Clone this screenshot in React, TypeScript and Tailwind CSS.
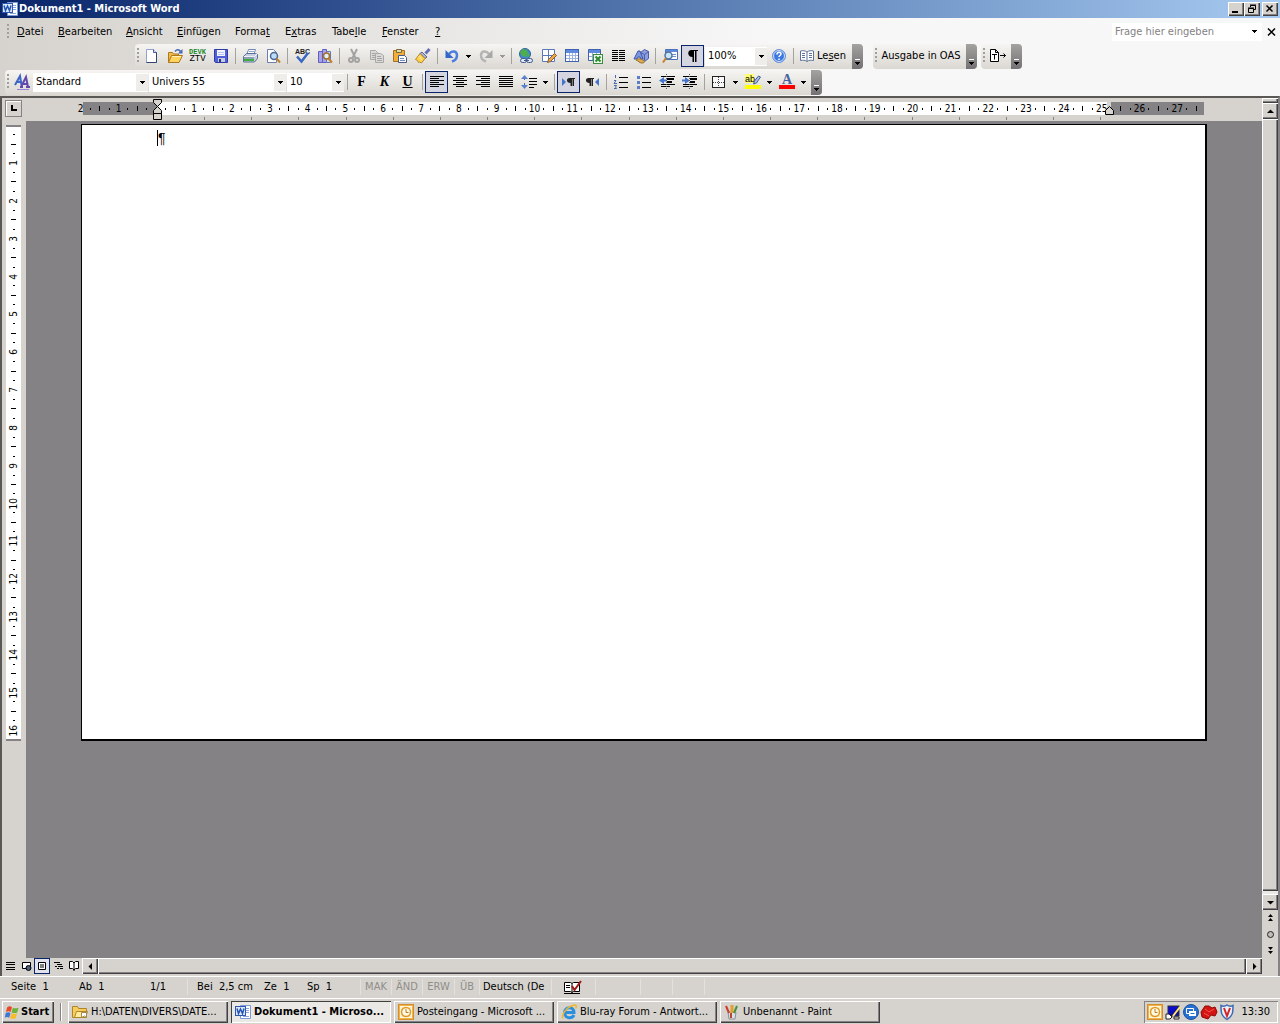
import type { ReactNode } from 'react';

const raised = 'bg-[#d6d3ce] shadow-[inset_1px_1px_0_#fff,inset_-1px_-1px_0_#404040,inset_-2px_-2px_0_#848284]';

function Svg({ children, size = 16 }: { children: ReactNode; size?: number }) {
  return (
    <svg width={size} height={size} viewBox="0 0 16 16" className="shrink-0 overflow-visible" aria-hidden="true">
      {children}
    </svg>
  );
}

function Lines({ rows, color = '#000' }: { rows: number[][]; color?: string }) {
  return (
    <>
      {rows.map(([x, y, w]) => (
        <rect key={`${x}-${y}`} x={x} y={y} width={w} height="1" fill={color} />
      ))}
    </>
  );
}

const icons: Record<string, ReactNode> = {
  new: (
    <>
      <path d="M2.5 1.5h7l3 3v10h-10z" fill="#fff" stroke="#8fa3cd" />
      <path d="M9.5 1.5v3h3" fill="#cdd9f0" stroke="#4a5f95" />
      <path d="M12.5 4.5v10h-10" fill="none" stroke="#34466f" />
    </>
  ),
  open: (
    <>
      <path d="M1.5 14.5v-10h4l1 1.5h5v2" fill="#f0bd4a" stroke="#b0781c" />
      <path d="M1.5 14.5l3-7h11l-3.5 7z" fill="#ffd45e" stroke="#b0781c" />
      <path d="M5 8.500h9" stroke="#fff1b8" />
      <path d="M8 3.5c2-2.500 4-2 5.500 0" fill="none" stroke="#4269b5" strokeWidth="1.5" />
      <path d="M15.500 1v4.500H11z" fill="#4269b5" />
    </>
  ),
  save: (
    <>
      <path d="M1.5 1.5h13v13h-12l-1-1z" fill="#5260d8" stroke="#2e3da6" />
      <rect x="4" y="2" width="8" height="6" fill="#f2f5ff" />
      <path d="M5 4.500h6M5 6.500h6" stroke="#b9c4ec" />
      <rect x="5" y="10" width="7" height="4" fill="#c5cbe0" />
      <rect x="6" y="11" width="2" height="3" fill="#26348b" />
    </>
  ),
  print: (
    <>
      <path d="M5 6l1.5-4.500h7L12 6z" fill="#fff" stroke="#7288b5" />
      <path d="M1.5 8.500l3-3h9l2 1v4l-3 3.500h-11z" fill="#c4cfdf" stroke="#5b6f94" />
      <path d="M2 8.500h10.500L15 6" fill="none" stroke="#eef2f8" />
      <path d="M2 9.500h10v1H2z" fill="#5b6f94" />
      <rect x="2" y="11" width="10" height="2" fill="#3fae3c" />
      <path d="M7 3.500h5" stroke="#92a9cf" />
    </>
  ),
  preview: (
    <>
      <path d="M2.5 1.5h6l3 3v10h-9z" fill="#fff" stroke="#6a7fae" />
      <circle cx="9" cy="8" r="3.5" fill="#bcdcf8" stroke="#4d6795" strokeWidth="1.5" />
      <path d="M11.5 10.500l3.500 4" stroke="#c3812d" strokeWidth="2" />
    </>
  ),
  spelling: (
    <>
      <text x="1" y="6" fontSize="7" fontWeight="700" fill="#222" fontFamily="Liberation Sans, sans-serif">ABC</text>
      <path d="M3 8.500l4.500 5L14 5" fill="none" stroke="#3a68c4" strokeWidth="2.5" />
    </>
  ),
  research: (
    <>
      <path d="M1.5 3.5h4v11h-4zM5.500 1.5h4v13h-4z" fill="#a7a3ea" stroke="#6260bb" />
      <path d="M9.500 3.500h4v11h-4z" fill="#d5d9f2" stroke="#6878ac" />
      <circle cx="9.5" cy="8" r="3" fill="#e3f0fc" stroke="#a17227" strokeWidth="1.5" />
      <path d="M11.5 10.500l3.500 4" stroke="#c3812d" strokeWidth="2" />
    </>
  ),
  cut: (
    <>
      <path d="M5 1l4.500 9M11 1L6.500 10" stroke="#a3a3a3" strokeWidth="2" />
      <circle cx="5" cy="12" r="2" fill="none" stroke="#a3a3a3" strokeWidth="2" />
      <circle cx="11" cy="12" r="2" fill="none" stroke="#a3a3a3" strokeWidth="2" />
    </>
  ),
  copy: (
    <>
      <path d="M1.5 2.500h5l2 2v7h-7z" fill="#dbdad7" stroke="#a8a8a8" />
      <path d="M6.500 5.500h5l3 2v7h-8z" fill="#dbdad7" stroke="#a8a8a8" />
      <path d="M3 5.500h3M3 7.500h3M3 9.500h3M8 8.500h4M8 10.500h5M8 12.500h5" stroke="#a3a3a3" />
    </>
  ),
  paste: (
    <>
      <path d="M1.5 2.500h11v11h-11z" fill="#f0ae3a" stroke="#a8701d" />
      <path d="M4.500 1.500h5v3h-5z" fill="#e3d9a8" stroke="#7a6b3c" />
      <path d="M6.500 7.500h6l2 2v5h-8z" fill="#fff" stroke="#46588c" />
      <path d="M8 10.500h4M8 12.500h5" stroke="#7287b9" />
    </>
  ),
  brush: (
    <>
      <path d="M10.500 5.500L14.500 1" stroke="#6a70b8" strokeWidth="3" />
      <path d="M7 4l5 5-2 1.500-5-5z" fill="#aab2d8" stroke="#5e6a8e" />
      <path d="M5 5.500l5 5-3.500 4.500-2-1-1 .500-1-2-2-1z" fill="#ffd24d" stroke="#b5882a" />
      <path d="M4 8l3 4" stroke="#fff0b0" />
    </>
  ),
  undo: (
    <>
      <path d="M5 6c3-4 8-3 8 1.500 0 3-2 5-5 6" fill="none" stroke="#4a7fe0" strokeWidth="2.5" />
      <path d="M1.5 2v8h8z" fill="#3466cc" />
    </>
  ),
  redo: (
    <>
      <path d="M11 6c-3-4-8-3-8 1.500 0 3 2 5 5 6" fill="none" stroke="#b5b5b5" strokeWidth="2.500" />
      <path d="M14.500 2v8h-8z" fill="#a8a8a8" />
    </>
  ),
  link: (
    <>
      <circle cx="7" cy="6" r="5.500" fill="#3f87d4" stroke="#2c6394" />
      <path d="M2 4l3-3 4 1 1 3-2 4-4-1zM10 5l2 2-3 3z" fill="#4fae4c" />
      <rect x="2.500" y="10.500" width="6" height="4" rx="2" fill="#dfe8f8" stroke="#3d5788" />
      <rect x="8.500" y="10.500" width="6" height="4" rx="2" fill="#dfe8f8" stroke="#3d5788" />
      <path d="M6 12.500h5" stroke="#3d5788" />
    </>
  ),
  tablesBorders: (
    <>
      <path d="M1.5 1.5h12v12h-12zM7.500 1.5v12M1.500 7.500h12" fill="#fff" stroke="#5b78ba" />
      <path d="M6.500 14.500l1-3 6-6 2 2-6 6z" fill="#eda84a" stroke="#8c5b2a" />
    </>
  ),
  table: (
    <>
      <rect x="1.5" y="1.500" width="13" height="12" fill="#fff" stroke="#3f62ac" />
      <rect x="2" y="2" width="12" height="3" fill="#5e89e0" />
      <path d="M5.500 5v8M8.500 5v8M11.500 5v8M2 7.500h12M2 10.500h12" stroke="#9cb3e2" />
    </>
  ),
  excel: (
    <>
      <path d="M1.5 1.5h12v11h-12z" fill="#fff" stroke="#3f62ac" />
      <rect x="2" y="2" width="11" height="3" fill="#5e89e0" />
      <path d="M5.500 5v7M9.500 5v7M2 8.500h11" stroke="#8fa9de" />
      <rect x="6.500" y="6.500" width="9" height="9" fill="#eef8ec" stroke="#3c8a3d" />
      <path d="M8.500 8.500l5 5M13.500 8.500l-5 5" stroke="#2b8a2d" strokeWidth="2" />
    </>
  ),
  columns: (
    <Lines
      rows={[2, 4, 6, 8, 10, 12].flatMap((y) => [
        [2, y, 6],
        [9, y, 6],
      ])}
    />
  ),
  drawing: (
    <>
      <path d="M7.500 4.500l4-3 4 2v7l-4 3-4-2z" fill="#8f9fdc" stroke="#4a5cae" />
      <path d="M7.500 4.500l4 2 4-3M11.500 6.500v6" fill="none" stroke="#4a5cae" />
      <path d="M1 11L5 3h2l3 8H7.500L7 9H5l-1 2z" fill="#7d98e3" stroke="#3d55a8" />
      <path d="M3 12c2-2 5-1 7 0s2 3-1 3-3-2-6-3z" fill="#e0ac50" stroke="#93702a" />
    </>
  ),
  docmap: (
    <>
      <path d="M3.500 1.500h12v10h-12z" fill="#fff" stroke="#4a71bd" />
      <rect x="4" y="2" width="11" height="2" fill="#5e89e0" />
      <path d="M10 6.500h4M10 8.500h4" stroke="#7490c8" />
      <circle cx="6.500" cy="7.500" r="3.500" fill="#c4e6f9" stroke="#56739e" strokeWidth="1.500" />
      <path d="M4 10l-3 4.500" stroke="#c3812d" strokeWidth="2" />
    </>
  ),
  pilcrow: <path d="M6.500 2H13v1h-1.500v11H10V3H9v11H7.500V9C2 9 2 2 6.500 2z" fill="#000" />,
  help: (
    <>
      <circle cx="8" cy="8" r="6.500" fill="#3d7ae0" stroke="#6d94dc" />
      <circle cx="8" cy="8" r="5.500" fill="none" stroke="#cfe0fb" />
      <path d="M6 6.500c0-3 4-3 4-.500 0 1.500-2 1.500-2 3M8 10.500v1.500" fill="none" stroke="#fff" strokeWidth="1.500" />
    </>
  ),
  read: (
    <>
      <path d="M8 4C6 2.500 4 2.500 1.500 3v9.500c2.500-.500 4.500-.500 6.500 1 2-1.500 4-1.500 6.500-1V3C12 2.500 10 2.500 8 4z" fill="#fff" stroke="#5f7396" />
      <path d="M8 4v9.500M3 5.500h3M3 7.500h3M3 9.500h3M10 5.500h3M10 7.500h3M10 9.500h3" stroke="#5f7396" />
    </>
  ),
  exportDoc: (
    <>
      <path d="M.5 1.500h5l3 3v9h-8zM5.500 1.500v3h3" fill="#fff" stroke="#000" />
      <path d="M2 6.500h5M4.500 6.500v5M10 7.500h5.500M13.500 5.500l2 2-2 2" fill="none" stroke="#000" />
    </>
  ),
  styles: (
    <>
      <path d="M1 11L6 2l1.500 9M3 8h4" fill="none" stroke="#3f66c4" strokeWidth="2" />
      <path d="M7 13l5-10 2 10M9 10h4.500M6 13h3M12 13h4" fill="none" stroke="#6248ae" strokeWidth="2" />
      <path d="M3 15.500h12" stroke="#a080d8" />
    </>
  ),
  left: <Lines rows={[[1, 2, 14], [1, 4, 9], [1, 6, 14], [1, 8, 9], [1, 10, 14], [1, 12, 9]]} />,
  center: <Lines rows={[[1, 2, 14], [4, 4, 8], [1, 6, 14], [4, 8, 8], [1, 10, 14], [4, 12, 8]]} />,
  right: <Lines rows={[[1, 2, 14], [6, 4, 9], [1, 6, 14], [6, 8, 9], [1, 10, 14], [6, 12, 9]]} />,
  justify: <Lines rows={[[1, 2, 14], [1, 4, 14], [1, 6, 14], [1, 8, 14], [1, 10, 14], [1, 12, 14]]} />,
  spacing: (
    <>
      <path d="M3.500 2v4M3.500 9v4" stroke="#4668ae" />
      <path d="M0 5l3.500-4L7 5zM0 11l3.500 4L7 11z" fill="#5c80ce" />
      <Lines rows={[[8, 4, 8], [8, 7, 8], [8, 10, 8], [8, 13, 5]]} />
    </>
  ),
  ltr: (
    <>
      <path d="M1 4v8l4-4z" fill="#4474cc" />
      <path d="M8.500 4H14v1h-1v7h-1.500V5h-.500v7H9.500V9C5 9 5 4 8.500 4z" fill="#222" />
    </>
  ),
  rtl: (
    <>
      <path d="M15 4v8l-4-4z" fill="#4474cc" />
      <path d="M4.500 4H10v1H9v7H7.500V5H7v7H5.500V9C1 9 1 4 4.500 4z" fill="#222" />
    </>
  ),
  numbers: (
    <>
      <path d="M2.500 1v3M1 6.500h2l-2 3h3M1 11.500h2.500l-1 1.500 1 1.500H1" fill="none" stroke="#4668ae" />
      <Lines rows={[[6, 3, 9], [6, 8, 9], [6, 13, 9]]} />
    </>
  ),
  bullets: (
    <>
      <path d="M1 2h3v3H1zM1 7h3v3H1zM1 12h3v3H1z" fill="#5b7cc8" />
      <Lines rows={[[6, 3, 9], [6, 8, 9], [6, 13, 9]]} />
    </>
  ),
  outdent: (
    <>
      <Lines rows={[[2, 2, 14], [8, 4, 7], [8, 5, 7], [8, 7, 5], [8, 8, 5], [2, 10, 14], [2, 12, 9]]} />
      <path d="M5 3v7L0 6.500zM5 5.500h3v2H5z" fill="#4474cc" />
      <path d="M7.500 0v15" stroke="#555" strokeDasharray="1 1" />
    </>
  ),
  indent: (
    <>
      <Lines rows={[[1, 2, 14], [8, 4, 7], [8, 5, 7], [8, 7, 5], [8, 8, 5], [1, 10, 14], [1, 12, 10]]} />
      <path d="M3 3v7l5-3.500zM0 5.500h3v2H0z" fill="#4474cc" />
      <path d="M7.500 0v15" stroke="#555" strokeDasharray="1 1" />
    </>
  ),
  borders: (
    <>
      <rect x="1.500" y="2.500" width="12" height="11" fill="#f8f8f8" stroke="#222" />
      <path d="M7.500 3v10M2 8.500h11" stroke="#444" strokeDasharray="1 1" />
    </>
  ),
  highlight: (
    <>
      <rect x="0" y="11" width="16" height="4" fill="#ff0" />
      <rect x="0" y="0" width="9" height="9" fill="#ffff70" />
      <text x="0" y="8" fontSize="9" fill="#000" fontFamily="Liberation Sans, sans-serif">ab</text>
      <path d="M8.500 10l1-3 4-5 2 1-4 6z" fill="#a9bfe6" stroke="#49618e" />
    </>
  ),
  fontColor: (
    <>
      <text x="3" y="10" fontSize="14" fontWeight="700" fill="#46639e" fontFamily="Liberation Serif, serif">A</text>
      <rect x="0" y="11" width="16" height="4" fill="#f00" />
    </>
  ),
  word: (
    <>
      <path d="M5.500 1.500h10v13h-10z" fill="#fff" stroke="#7c9bd6" />
      <path d="M11 4.500h3M11 6.500h3M11 8.500h3M8 12.500h6" stroke="#8aa5da" />
      <rect x="0.500" y="2.500" width="10" height="9" fill="#dbe7fb" stroke="#2e58ae" />
      <path d="M2 4.500l1.500 5L5.500 5l2 4.500 1.500-5" fill="none" stroke="#2453b3" strokeWidth="1.500" />
    </>
  ),
  folder: (
    <>
      <path d="M.5 2.500h5l1 2h8v9H.500z" fill="#f4cd60" stroke="#b28423" />
      <path d="M2.500 13.500l2-6h11l-2 6z" fill="#ffec9d" stroke="#b28423" />
      <path d="M9.500 8.500h5v5l-2-1.500-3 1.500z" fill="#fff" stroke="#a38b4e" />
    </>
  ),
  outlook: (
    <>
      <rect x="0.500" y="0.500" width="15" height="15" fill="#f4b347" stroke="#d08f2c" />
      <rect x="2.500" y="2.500" width="11" height="11" fill="#ffeab0" stroke="#fff6dc" />
      <circle cx="8" cy="8" r="4.500" fill="#fffae6" stroke="#dd9a2c" strokeWidth="1.500" />
      <path d="M8 5v3.500h2.500" fill="none" stroke="#c07a1a" />
    </>
  ),
  ie: (
    <>
      <path d="M13 11C11 15 4 15 3.500 8.500 3.500 2.500 13 2 13 8.500H5" fill="none" stroke="#2a8fdd" strokeWidth="3" />
      <path d="M2.500 14.500C-1 13 5 2 14 1c2 0 1.500 2 .500 3.500" fill="none" stroke="#efb72c" strokeWidth="1.500" />
    </>
  ),
  paint: (
    <>
      <path d="M4 8l1 7h6l1-7z" fill="#d8dde6" stroke="#8a8f9c" />
      <path d="M5 9L2 2" stroke="#d03a2a" strokeWidth="2" />
      <path d="M8 9V1" stroke="#e1a02a" strokeWidth="3" />
      <path d="M10 9l3-7" stroke="#4b8e3c" strokeWidth="2" />
      <path d="M7 14V9" stroke="#b5482f" strokeWidth="2" />
    </>
  ),
  windows: (
    <>
      <path d="M2.500 2.500c2-1.500 4-1 5.500 0l-1.500 5.500c-1.500-1-3.500-1-5.500 0z" fill="#e8492a" />
      <path d="M9 3c2 1 4 1 6.500 0L14 8.500c-2 1-4.500 1-6.500 0z" fill="#6db33a" />
      <path d="M.8 9c2-1 4-1 5.500 0l-1.500 5.500c-1.500-1-3.500-1-5 0z" fill="#3d74d8" />
      <path d="M7.300 9.500c2 1 4 1 6.500 0l-1.500 5.500c-2 1-4.500 1-6.500 0z" fill="#f5bd2a" />
    </>
  ),
  monitor: (
    <>
      <rect x="3" y="2" width="11" height="10" fill="#0a0ad0" stroke="#303030" />
      <path d="M4 11L13 3v8z" fill="#12128c" />
      <path d="M15 3l-7 9" stroke="#ffe86a" strokeWidth="2" />
      <path d="M1 10h3l3 3-2 2H1zM9 13h5v2H9z" fill="#fff" stroke="#222" />
    </>
  ),
  remote: (
    <>
      <circle cx="8" cy="8" r="7.500" fill="#276fd0" stroke="#1d53a2" />
      <path d="M3.500 4.500h7v5h-7z" fill="none" stroke="#fff" />
      <path d="M6 7h7v5H6z" fill="#fff" />
      <path d="M7.500 9.500h4" stroke="#276fd0" />
    </>
  ),
  redBlob: (
    <>
      <path d="M0 8l4-6h4l3 2 3-1 2 5-2 4-4-1-3 4-6-2z" fill="#d41414" stroke="#8d0808" />
      <path d="M4 5l4 3 5-3M3 9l5 3" fill="none" stroke="#f25b4b" />
    </>
  ),
  shield: (
    <>
      <path d="M2 1.500c2 1 4 1 6-.500 2 1.500 4 1.500 6 .500 0 7 0 10-6 14C2 11.500 2 8.500 2 1.500z" fill="#e9f0fa" stroke="#3c6ab5" strokeWidth="1.500" />
      <path d="M5 4l3 8 3-8" fill="none" stroke="#d02626" strokeWidth="2" />
    </>
  ),
  book: (
    <>
      <path d="M.5 3.500h6l1.500 1 1.500-1h6v9h-6l-1.500 1-1.500-1h-6z" fill="#fff" stroke="#000" />
      <path d="M8 4.500v9M2 6.500h4M2 8.500h4M0 14.500h16" stroke="#000" />
      <path d="M8 7l2.500 4L17 2" fill="none" stroke="#a01818" strokeWidth="2" />
    </>
  ),
  viewNormal: <Lines rows={[[4, 4, 9], [4, 6, 9], [4, 9, 9], [4, 11, 9]]} />,
  viewWeb: (
    <>
      <path d="M4.500 4.500h8v6h-8z" fill="#fff" stroke="#000" />
      <circle cx="10.500" cy="10" r="2.500" fill="#4a5f85" stroke="#000" />
    </>
  ),
  viewPrint: (
    <>
      <path d="M4.500 4.500h7v7h-7z" fill="#fff" stroke="#000" />
      <path d="M6 7h4M6 9h4" stroke="#000" />
    </>
  ),
  viewOutline: <Lines rows={[[4, 4, 6], [7, 6, 5], [5, 8, 2], [8, 8, 5], [7, 10, 2], [10, 10, 3]]} />,
  viewRead: (
    <>
      <path d="M3.500 3.500h3L8 5l1.500-1.500h3v7h-3L8 12l-1.500-1.500h-3z" fill="#fff" stroke="#000" />
      <path d="M8 5v8" stroke="#000" />
    </>
  ),
};

function Arrow({ dir = 'down' }: { dir?: 'up' | 'down' | 'left' | 'right' }) {
  const paths = { down: 'M1 3h7L4.500 6.500z', up: 'M1 6h7L4.500 2.500z', left: 'M6 1v7L2.500 4.500z', right: 'M3 1v7l3.500-3.500z' };
  return (
    <svg width="9" height="9" viewBox="0 0 9 9" className="shrink-0" aria-hidden="true">
      <path d={paths[dir]} />
    </svg>
  );
}

function DropArrow({ color = '#000' }: { color?: string }) {
  return (
    <svg width="5" height="3" viewBox="0 0 5 3" className="shrink-0" aria-hidden="true">
      <path d="M0 0h5v1H4v1H3v1H2V2H1V1H0z" fill={color} />
    </svg>
  );
}

function Grip() {
  return <span className="mr-px ml-0.5 h-4 w-0.5 shrink-0 bg-[repeating-linear-gradient(to_bottom,#a09e9a_0_2px,transparent_2px_4px)]" />;
}

function Sep() {
  return (
    <span className="flex w-1.5 shrink-0 justify-center">
      <span className="h-4 w-px bg-[#a5a29c]" />
    </span>
  );
}

function Tool({ label, icon, active, drop, disabled }: { label: string; icon: ReactNode; active?: boolean; drop?: boolean; disabled?: boolean }) {
  return (
    <>
      <button
        aria-label={label}
        disabled={disabled}
        className={`flex h-[22px] w-[23px] shrink-0 items-center justify-center ${active ? 'border border-[#0a246a] bg-[#d4d5e0]' : ''}`}
      >
        {icon}
      </button>
      {drop && (
        <button aria-label={`${label} Optionen`} disabled={disabled} className="flex h-[22px] w-[11px] shrink-0 items-center justify-center">
          <DropArrow color={disabled ? '#999' : '#000'} />
        </button>
      )}
    </>
  );
}

function I({ name }: { name: string }) {
  return <Svg>{icons[name]}</Svg>;
}

function Combo({ label, value, width }: { label: string; value: string; width: string }) {
  return (
    <span className={`flex h-[19px] shrink-0 items-center bg-white ${width}`}>
      <select aria-label={label} className="h-full min-w-0 flex-1 appearance-none bg-white pl-[3px] outline-none">
        <option>{value}</option>
      </select>
      <span className="flex h-[17px] w-3 items-center justify-center bg-[#efedea]">
        <DropArrow />
      </span>
    </span>
  );
}

function Toolbar({ children, label }: { children: ReactNode; label: string }) {
  return (
    <div role="toolbar" aria-label={label} className="flex h-[25px] shrink-0 items-center rounded-sm bg-linear-to-b from-[#f6f5f3] to-[#dbd8d2]">
      {children}
      <button aria-label="Optionen für Symbolleisten" className="ml-0.5 flex h-[25px] w-[11px] flex-col items-center justify-end gap-0.5 rounded-r-sm bg-linear-to-b from-[#a5a3a0] to-[#737173] pb-1">
        <span className="h-px w-[5px] bg-white" />
        <DropArrow />
      </button>
    </div>
  );
}

const menus = [
  ['', 'D', 'atei', 'w-[41px]'],
  ['', 'B', 'earbeiten', 'w-[68px]'],
  ['', 'A', 'nsicht', 'w-[51px]'],
  ['', 'E', 'infügen', 'w-[58px]'],
  ['Forma', 't', '', 'w-[50px]'],
  ['E', 'x', 'tras', 'w-[47px]'],
  ['Tabe', 'l', 'le', 'w-[50px]'],
  ['', 'F', 'enster', 'w-[53px]'],
  ['', '?', '', 'w-5'],
];

// one cell per quarter centimetre
function rulerMark(q: number) {
  if (q === 0) return null;
  if (q % 4 === 0) return Math.abs(q / 4);
  return q % 2 === 0 ? 'tick' : 'dot';
}

function HorizontalRuler() {
  const marks = Array.from({ length: 119 }, (_, i) => rulerMark(i - 8));
  return (
    <div className="relative mr-[58px] ml-[55px] flex min-w-0 flex-1 flex-col pt-1">
      <div className="h-[13px] bg-[linear-gradient(to_right,transparent_2px,#848284_2px_6.76%,#fff_6.76%_91.4%,#d6d3ce_91.4%_91.7%,#848284_91.7%)]">
        <div className="mr-1 -ml-[5px] flex h-full items-center">
          {marks.map((m, i) => (
            <span key={i} className="flex min-w-0 flex-1 basis-0 justify-center text-[10px] leading-3 whitespace-nowrap">
              {m === 'tick' ? <span className="h-[5px] w-px bg-black" /> : m === 'dot' ? <span className="h-0.5 w-px bg-black" /> : m}
            </span>
          ))}
        </div>
      </div>
      <div className="mt-0.5 mr-[7.1%] ml-[8.9%] flex">
        {Array.from({ length: 20 }, (_, i) => (
          <span key={i} className="flex flex-1 justify-center">
            <span className="h-[3px] w-px bg-[#848284]" />
          </span>
        ))}
      </div>
      <svg width="9" height="23" viewBox="0 0 9 23" className="absolute top-0 left-[calc(6.76%-4px)]" aria-hidden="true">
        <path d="M.5 1.500h8v3l-4 4-4-4z" fill="#d6d3ce" stroke="#000" />
        <path d="M.5 15.500v-3l4-4 4 4v3zM.500 15.500h8v6h-8z" fill="#d6d3ce" stroke="#000" />
      </svg>
      <svg width="9" height="9" viewBox="0 0 9 9" className="absolute top-2 left-[calc(91.5%-4px)]" aria-hidden="true">
        <path d="M.5 8.500v-4l4-4 4 4v4z" fill="#d6d3ce" stroke="#000" />
      </svg>
    </div>
  );
}

function VerticalRuler() {
  const marks = Array.from({ length: 64 }, (_, i) => rulerMark(i + 1));
  return (
    <div className="flex w-6 shrink-0 flex-col pt-1 pl-1">
      <div className="flex h-[616px] w-[15px] flex-col border-t-2 border-b-2 border-t-[#848284] border-b-[#848284] bg-white pt-[3px] pb-1">
        {marks.map((m, i) => (
          <span key={i} className="flex min-h-0 flex-1 basis-0 items-center justify-center">
            {m === 'tick' ? (
              <span className="h-px w-[5px] bg-black" />
            ) : m === 'dot' ? (
              <span className="h-px w-0.5 bg-black" />
            ) : (
              <span className="rotate-180 text-[10px] leading-3 [writing-mode:vertical-rl]">{m}</span>
            )}
          </span>
        ))}
      </div>
    </div>
  );
}

function VerticalScrollbar() {
  return (
    <div className="flex w-4 shrink-0 flex-col">
      <div className={`h-[5px] ${raised}`} />
      <button aria-label="Nach oben" className={`flex h-4 items-center justify-center ${raised}`}>
        <Arrow dir="up" />
      </button>
      <div className={`flex-1 ${raised}`} />
      <div className="h-[3px] bg-[#ebe9e6]" />
      <button aria-label="Nach unten" className={`flex h-4 items-center justify-center ${raised}`}>
        <Arrow />
      </button>
      <button aria-label="Vorherige Seite" className="flex h-4 items-center justify-center">
        <svg width="7" height="8" viewBox="0 0 7 8"><path d="M3.500 0L6 3H1zM3.500 4L6 7H1z" /></svg>
      </button>
      <button aria-label="Browseobjekt auswählen" className="flex h-4 items-center justify-center">
        <svg width="7" height="7" viewBox="0 0 7 7"><circle cx="3.500" cy="3.500" r="3" fill="#c0bebb" stroke="#222" /></svg>
      </button>
      <button aria-label="Nächste Seite" className="flex h-4 items-center justify-center">
        <svg width="7" height="8" viewBox="0 0 7 8"><path d="M3.500 4L6 1H1zM3.500 8L6 5H1z" /></svg>
      </button>
      <div className="h-[18px]" />
    </div>
  );
}

const views = [
  ['viewNormal', 'Normalansicht'],
  ['viewWeb', 'Weblayout'],
  ['viewPrint', 'Seitenlayout'],
  ['viewOutline', 'Gliederung'],
  ['viewRead', 'Lesemodus'],
];

function StatusPane({ children, width, off }: { children?: ReactNode; width: string; off?: boolean }) {
  return (
    <span className={`flex h-4 shrink-0 items-center border-r border-[#e3e1dd] whitespace-pre ${width} ${off ? 'text-[#8f8d8a]' : ''}`}>{children}</span>
  );
}

const tasks = [
  { icon: 'folder', title: 'H:\\DATEN\\DIVERS\\DATE...' },
  { icon: 'word', title: 'Dokument1 - Microso...', active: true },
  { icon: 'outlook', title: 'Posteingang - Microsoft ...' },
  { icon: 'ie', title: 'Blu-ray Forum - Antwort...' },
  { icon: 'paint', title: 'Unbenannt - Paint' },
];

export default function App() {
  return (
    <div className="flex h-screen flex-col overflow-hidden bg-[#d6d3ce] font-['DejaVu_Sans_Condensed','DejaVu_Sans',sans-serif] text-[11px] leading-4 text-black [font-stretch:condensed]">
      <header className="flex h-[18px] shrink-0 items-center bg-linear-to-r from-[#0a246a] to-[#a6caf0] pr-0.5 pl-0.5">
        <I name="word" />
        <h1 className="ml-px flex-1 font-bold text-white">Dokument1 - Microsoft Word</h1>
        <button aria-label="Minimieren" className={`flex h-3.5 w-4 items-center justify-center ${raised}`}>
          <svg width="10" height="10" viewBox="0 0 10 10"><path d="M1 7h6v2H1z" /></svg>
        </button>
        <button aria-label="Wiederherstellen" className={`flex h-3.5 w-4 items-center justify-center ${raised}`}>
          <svg width="10" height="10" viewBox="0 0 10 10"><path d="M3.500 3V1.500h5v4H7M3 1h6M1.500 4.500h5v4h-5zM1 4h6" fill="none" stroke="#000" /></svg>
        </button>
        <button aria-label="Schließen" className={`ml-0.5 flex h-3.5 w-4 items-center justify-center ${raised}`}>
          <svg width="10" height="10" viewBox="0 0 10 10"><path d="M1.500 1.500l6 6M7.500 1.500l-6 6" stroke="#000" strokeWidth="1.500" /></svg>
        </button>
      </header>

      <div className="flex h-[78px] shrink-0 flex-col bg-linear-to-r from-[#d6d3ce] to-[#f7f7f7] to-60% pt-0.5">
        <div className="flex h-[23px] items-center pl-[5px]">
          <Grip />
          <nav className="ml-0.5 flex flex-1">
            {menus.map(([before, key, after, width]) => (
              <button key={before + key} className={`shrink-0 pl-[5px] text-left whitespace-nowrap ${width}`}>
                {before}
                <u>{key}</u>
                {after}
              </button>
            ))}
          </nav>
          <div className="flex h-[18px] w-[150px] items-center bg-white pr-[5px]">
            <input aria-label="Frage hier eingeben" placeholder="Frage hier eingeben" className="min-w-0 flex-1 bg-white pl-[3px] outline-none placeholder:text-[#848284]" />
            <DropArrow />
          </div>
          <button aria-label="Fenster schließen" className="flex w-[18px] justify-center">
            <svg width="9" height="8" viewBox="0 0 9 8"><path d="M1 .500l7 7M8 .500l-7 7" stroke="#000" strokeWidth="1.500" /></svg>
          </button>
        </div>

        <div className="flex h-[26px] items-center pl-[135px]">
          <Toolbar label="Standard">
            <Grip />
            <Tool label="Neu" icon={<I name="new" />} />
            <Tool label="Öffnen" icon={<I name="open" />} />
            <Tool
              label="DEVK ZTV"
              icon={
                <span className="flex flex-col font-['Liberation_Mono',monospace] text-[9px] leading-[7px]">
                  <span className="text-[7px] font-bold text-[#1d8a2d]">DEVK</span>
                  <span>ZTV</span>
                </span>
              }
            />
            <Tool label="Speichern" icon={<I name="save" />} />
            <Sep />
            <Tool label="Drucken" icon={<I name="print" />} />
            <Tool label="Seitenansicht" icon={<I name="preview" />} />
            <Sep />
            <Tool label="Rechtschreibung" icon={<I name="spelling" />} />
            <Tool label="Recherchieren" icon={<I name="research" />} />
            <Sep />
            <Tool label="Ausschneiden" icon={<I name="cut" />} disabled />
            <Tool label="Kopieren" icon={<I name="copy" />} disabled />
            <Tool label="Einfügen" icon={<I name="paste" />} />
            <Tool label="Format übertragen" icon={<I name="brush" />} />
            <Sep />
            <Tool label="Rückgängig" icon={<I name="undo" />} drop />
            <Tool label="Wiederholen" icon={<I name="redo" />} drop disabled />
            <Sep />
            <Tool label="Hyperlink" icon={<I name="link" />} />
            <Tool label="Tabellen und Rahmen" icon={<I name="tablesBorders" />} />
            <Tool label="Tabelle einfügen" icon={<I name="table" />} />
            <Tool label="Excel-Tabelle einfügen" icon={<I name="excel" />} />
            <Tool label="Spalten" icon={<I name="columns" />} />
            <Tool label="Zeichnen" icon={<I name="drawing" />} />
            <Sep />
            <Tool label="Dokumentstruktur" icon={<I name="docmap" />} />
            <Tool label="Absatzmarken" icon={<I name="pilcrow" />} active />
            <Combo label="Zoom" value="100%" width="ml-px w-[62px]" />
            <Tool label="Hilfe" icon={<I name="help" />} />
            <Sep />
            <button className="flex w-[54px] shrink-0 items-center gap-0.5 pl-[3px] whitespace-nowrap">
              <I name="read" />
              <span>Le<u>s</u>en</span>
            </button>
          </Toolbar>
          <div className="ml-2.5 flex gap-1">
            <Toolbar label="Ausgabe">
              <Grip />
              <button className="w-[86px] text-center whitespace-nowrap">Ausgabe in OAS</button>
            </Toolbar>
            <Toolbar label="Export">
              <Grip />
              <Tool label="Exportieren" icon={<I name="exportDoc" />} />
            </Toolbar>
          </div>
        </div>

        <div className="flex h-[26px] items-center pl-[5px]">
          <Toolbar label="Format">
            <Grip />
            <Tool label="Formatvorlagen" icon={<I name="styles" />} />
            <span className="flex gap-px">
              <Combo label="Formatvorlage" value="Standard" width="w-[115px]" />
              <Combo label="Schriftart" value="Univers 55" width="w-[137px]" />
              <Combo label="Schriftgrad" value="10" width="w-[57px]" />
            </span>
            <Sep />
            <Tool label="Fett" icon={<b className="font-['Liberation_Serif',serif] text-sm">F</b>} />
            <Tool label="Kursiv" icon={<b className="font-['Liberation_Serif',serif] text-sm italic">K</b>} />
            <Tool label="Unterstrichen" icon={<b className="font-['Liberation_Serif',serif] text-sm underline">U</b>} />
            <Sep />
            <Tool label="Linksbündig" icon={<I name="left" />} active />
            <Tool label="Zentriert" icon={<I name="center" />} />
            <Tool label="Rechtsbündig" icon={<I name="right" />} />
            <Tool label="Blocksatz" icon={<I name="justify" />} />
            <Tool label="Zeilenabstand" icon={<I name="spacing" />} drop />
            <Sep />
            <Tool label="Von links nach rechts" icon={<I name="ltr" />} active />
            <Tool label="Von rechts nach links" icon={<I name="rtl" />} />
            <Sep />
            <Tool label="Nummerierung" icon={<I name="numbers" />} />
            <Tool label="Aufzählungszeichen" icon={<I name="bullets" />} />
            <Tool label="Einzug verkleinern" icon={<I name="outdent" />} />
            <Tool label="Einzug vergrößern" icon={<I name="indent" />} />
            <Sep />
            <Tool label="Rahmenlinie" icon={<I name="borders" />} drop />
            <Tool label="Hervorheben" icon={<I name="highlight" />} drop />
            <Tool label="Schriftfarbe" icon={<I name="fontColor" />} drop />
          </Toolbar>
        </div>
      </div>

      <div className="flex min-h-0 flex-1 border-t-2 border-r-2 border-l-2 border-t-[#5a5855] border-r-[#848284] border-l-[#5a5855]">
        <div className="flex min-w-0 flex-1 flex-col">
          <div className="flex h-[23px] shrink-0">
            <div className="w-6 shrink-0 pt-0.5 pl-[3px]">
              <button aria-label="Tabstopp" className="flex size-[17px] items-center justify-center border border-[#848284] shadow-[inset_1px_1px_0_#fff]">
                <svg width="7" height="7" viewBox="0 0 7 7"><path d="M1 0h2v4h4v2H1z" /></svg>
              </button>
            </div>
            <HorizontalRuler />
          </div>
          <main className="flex min-h-0 flex-1">
            <VerticalRuler />
            <div className="min-w-0 flex-1 bg-[#848284] pt-[3px] pr-[55px] pl-[55px]">
              <article className="flex h-[617px] items-start border-t border-r-2 border-b-2 border-l border-black bg-white pt-[5px] pl-[75px]">
                <span className="h-4 w-px bg-black" />
                <p className="font-['Liberation_Sans',sans-serif] text-sm leading-4">¶</p>
              </article>
            </div>
          </main>
          <div className="flex h-[18px] shrink-0 items-start">
            <div className="flex">
              {views.map(([icon, label]) => (
                <button key={icon} aria-label={label} className={`flex size-4 items-center justify-center ${icon === 'viewPrint' ? 'border border-[#0a246a] bg-[#e2e2ea]' : ''}`}>
                  <I name={icon} />
                </button>
              ))}
            </div>
            <button aria-label="Nach links" className={`flex h-4 w-4 items-center justify-center ${raised}`}>
              <Arrow dir="left" />
            </button>
            <div className={`h-4 flex-1 ${raised}`} />
            <button aria-label="Nach rechts" className={`flex h-4 w-4 items-center justify-center ${raised}`}>
              <Arrow dir="right" />
            </button>
          </div>
        </div>
        <VerticalScrollbar />
      </div>

      <footer className="flex h-[22px] shrink-0 items-center border-t border-white pb-px pl-[11px]">
        <StatusPane width="w-[68px] border-r-0">Seite  1</StatusPane>
        <StatusPane width="w-[71px] border-r-0">Ab  1</StatusPane>
        <StatusPane width="w-[38px]">1/1</StatusPane>
        <StatusPane width="w-[76px] border-r-0 pl-[9px]">Bei  2,5 cm</StatusPane>
        <StatusPane width="w-[43px] border-r-0">Ze  1</StatusPane>
        <StatusPane width="w-[54px]">Sp  1</StatusPane>
        <StatusPane width="w-[31px] justify-center" off>MAK</StatusPane>
        <StatusPane width="w-[31px] justify-center" off>ÄND</StatusPane>
        <StatusPane width="w-[32px] justify-center" off>ERW</StatusPane>
        <StatusPane width="w-[25px] justify-center" off>ÜB</StatusPane>
        <StatusPane width="w-[72px] pl-[3px]">Deutsch (De</StatusPane>
        <StatusPane width="w-[44px] pl-3"><I name="book" /></StatusPane>
        <StatusPane width="w-[45px]" />
        <StatusPane width="w-[32px]" />
        <StatusPane width="w-[32px]" />
      </footer>

      <div className="flex h-[26px] shrink-0 items-center border-t border-white px-0.5">
        <button className={`flex h-[22px] w-[52px] items-center gap-0.5 pl-[3px] font-bold ${raised}`}>
          <Svg size={14}>{icons.windows}</Svg>
          Start
        </button>
        <span className="mx-1.5 h-[18px] w-0.5 border-l border-[#848284] bg-white" />
        <div className="flex min-w-0 flex-1 gap-[3px] pr-4">
          {tasks.map((t) => (
            <button
              key={t.icon}
              className={`flex h-[22px] w-40 items-center gap-[3px] pl-1 whitespace-nowrap ${
                t.active ? 'bg-[#ebe9e6] pt-px font-bold shadow-[inset_1px_1px_0_#404040,inset_-1px_-1px_0_#fff]' : raised
              }`}
            >
              <I name={t.icon} />
              <span className="min-w-0 overflow-hidden">{t.title}</span>
            </button>
          ))}
        </div>
        <div className="flex h-[22px] w-[134px] items-center gap-0.5 pl-[3px] shadow-[inset_1px_1px_0_#848284,inset_-1px_-1px_0_#fff]">
          <I name="outlook" />
          <I name="monitor" />
          <I name="remote" />
          <I name="redBlob" />
          <I name="shield" />
          <time className="ml-auto pr-2">13:30</time>
        </div>
      </div>
    </div>
  );
}
